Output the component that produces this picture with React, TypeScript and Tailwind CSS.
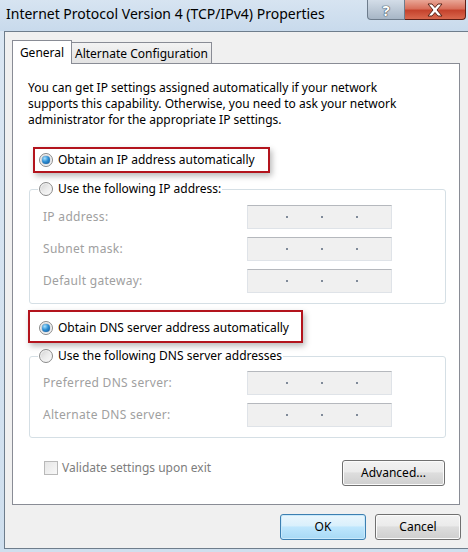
import type { ReactNode } from "react";

const FONT = "font-['Noto_Sans','Open_Sans',sans-serif]";

function Radio({ checked = false }: { checked?: boolean }) {
  return (
    <span className="flex h-[14px] w-[14px] shrink-0 items-center justify-center rounded-full border border-[#8a8a8a] bg-gradient-to-br from-[#d2d2d2] via-[#ebebeb] to-[#fbfbfb] shadow-[inset_0_0_0_1px_#f4f4f4]">
      {checked && (
        <span className="h-[8px] w-[8px] rounded-full bg-[radial-gradient(circle_at_35%_30%,#a6e1ff_0%,#2d8ed3_45%,#0f4f8f_100%)] shadow-[0_0_1px_#0c3a6b]" />
      )}
    </span>
  );
}

function RadioLabel({ checked, children }: { checked?: boolean; children: ReactNode }) {
  return (
    <span className="flex items-center gap-[5px] text-[12px] leading-[16px] text-black">
      <Radio checked={checked} />
      <span>{children}</span>
    </span>
  );
}

function IpBox() {
  return (
    <div className="flex h-[24px] w-[145px] items-center border border-[#dfe3e8] border-t-[#b5b8bd] bg-[#f0f0f0] pl-[38px]">
      <span className="h-[2px] w-[2px] bg-[#7f8a99]" />
      <span className="ml-[33px] h-[2px] w-[2px] bg-[#7f8a99]" />
      <span className="ml-[33px] h-[2px] w-[2px] bg-[#7f8a99]" />
    </div>
  );
}

function FieldRow({ label }: { label: string }) {
  return (
    <div className="flex items-center pl-[13px]">
      <span className="w-[204px] text-[12px] tracking-[0.3px] text-[#a0a0a0]">{label}</span>
      <IpBox />
    </div>
  );
}

function Callout({ className, children }: { className: string; children: ReactNode }) {
  return (
    <div
      className={`flex items-center border-2 border-[#b3141d] shadow-[2px_3px_6px_rgba(0,0,0,0.28)] ${className}`}
    >
      {children}
    </div>
  );
}

function WinButton({ label, primary = false, className = "" }: { label: string; primary?: boolean; className?: string }) {
  return (
    <button
      className={`flex items-center justify-center rounded-[3px] border text-[12px] text-black ${
        primary
          ? "border-[#3c7fb1] bg-[linear-gradient(#eaf6fd_0%,#d9f0fc_45%,#bee6fd_50%,#a7d9f5_100%)] shadow-[inset_0_0_0_1px_#c9e9fb]"
          : "border-[#707070] bg-[linear-gradient(#f2f2f2_0%,#ebebeb_45%,#dddddd_50%,#cfcfcf_100%)] shadow-[inset_0_0_0_1px_#fbfbfb]"
      } ${className}`}
    >
      {label}
    </button>
  );
}

export default function App() {
  return (
    <div className={`flex h-[552px] w-[468px] flex-col overflow-hidden bg-gradient-to-b from-[#dbe7f3] to-[#cfdfee] ${FONT}`}>
      {/* title bar */}
      <div className="flex h-[31px] shrink-0 items-start bg-gradient-to-b from-[#d7e4f1] to-[#c8daec]">
        <div className="pl-[6px] pt-[4px] text-[14px] leading-[20px] text-black">
          Internet Protocol Version 4 (TCP/IPv4) Properties
        </div>
        <div className="ml-auto mr-[2px] flex">
          <div className="flex h-[20px] w-[38px] items-center justify-center rounded-bl-[4px] border border-t-0 border-[#6d7c8c] bg-gradient-to-b from-[#d3dde8] to-[#a7b6c6]">
            <span className="text-[15px] font-bold leading-[18px] text-white [text-shadow:0_0_1px_#3d4a58,0_0_1px_#3d4a58,0_0_1px_#3d4a58]">
              ?
            </span>
          </div>
          <div className="flex h-[20px] w-[61px] items-center justify-center rounded-br-[4px] border border-l-0 border-t-0 border-[#5d1f16] bg-[linear-gradient(#e9a696_0%,#d8705c_45%,#c5432d_55%,#d9684e_100%)]">
            <svg width="18" height="14" viewBox="0 0 18 14">
              <path
                d="M2 1h4l3 3.5L12 1h4l-5 6 5 6h-4l-3-3.5L6 13H2l5-6z"
                fill="#ffffff"
                stroke="#5a2418"
                strokeWidth="1"
                strokeLinejoin="round"
              />
            </svg>
          </div>
        </div>
      </div>

      {/* client area */}
      <div className="ml-[4px] flex h-[518px] shrink-0 flex-col border-b border-l border-t border-[#6e7d8c] bg-[#f0f0f0]">
        {/* tabs */}
        <div className="flex items-end pl-[7px] pt-[8px]">
          <div className="relative z-10 -mb-px flex h-[24px] w-[60px] items-center justify-center border border-b-0 border-[#898c95] bg-white text-[12px] text-black">
            General
          </div>
          <div className="-ml-px flex h-[21px] w-[141px] items-center justify-center border border-b-0 border-[#898c95] bg-gradient-to-b from-[#f3f3f3] to-[#e3e3e3] pt-[1px] text-[12px] text-black">
            Alternate Configuration
          </div>
        </div>

        {/* panel */}
        <div className="ml-[7px] flex h-[442px] w-[448px] flex-col border border-[#898c95] bg-white">
          <p className="ml-[15px] mt-[16px] text-[12px] leading-[16px] text-black">
            You can get IP settings assigned automatically if your network
            <br />
            supports this capability. Otherwise, you need to ask your network
            <br />
            administrator for the appropriate IP settings.
          </p>

          <Callout className="ml-[20px] mt-[19px] h-[26px] w-[237px] pl-[4px]">
            <RadioLabel checked>Obtain an IP address automatically</RadioLabel>
          </Callout>

          <fieldset className="ml-[16px] mt-[8px] w-[417px] rounded-[3px] border border-[#d5dfe5]">
            <legend className="ml-[8px] px-[1px]">
              <RadioLabel>Use the following IP address:</RadioLabel>
            </legend>
            <div className="mt-[8px] flex flex-col gap-[8px] pb-[10px]">
              <FieldRow label="IP address:" />
              <FieldRow label="Subnet mask:" />
              <FieldRow label="Default gateway:" />
            </div>
          </fieldset>

          <Callout className="ml-[15px] mt-[6px] h-[33px] w-[275px] pl-[9px] pt-[2px]">
            <RadioLabel checked>Obtain DNS server address automatically</RadioLabel>
          </Callout>

          <fieldset className="ml-[16px] mt-[5px] w-[417px] rounded-[3px] border border-[#d5dfe5]">
            <legend className="ml-[8px] px-[1px]">
              <RadioLabel>Use the following DNS server addresses</RadioLabel>
            </legend>
            <div className="mt-[7px] flex flex-col gap-[8px] pb-[10px]">
              <FieldRow label="Preferred DNS server:" />
              <FieldRow label="Alternate DNS server:" />
            </div>
          </fieldset>

          <div className="mt-[22px] flex items-start justify-between pl-[31px] pr-[14px]">
            <label className="flex items-center gap-[4px] text-[12px] leading-[16px] text-[#7d7d7d]">
              <span className="h-[14px] w-[14px] border border-[#b9b9b9] bg-gradient-to-br from-[#e6e6e6] to-[#f8f8f8]" />
              Validate settings upon exit
            </label>
            <WinButton label="Advanced..." className="h-[26px] w-[103px]" />
          </div>
        </div>

        {/* dialog buttons */}
        <div className="mt-[9px] flex justify-end gap-[9px] pr-[7px]">
          <WinButton label="OK" primary className="h-[26px] w-[86px]" />
          <WinButton label="Cancel" className="h-[26px] w-[86px]" />
        </div>
      </div>
    </div>
  );
}
